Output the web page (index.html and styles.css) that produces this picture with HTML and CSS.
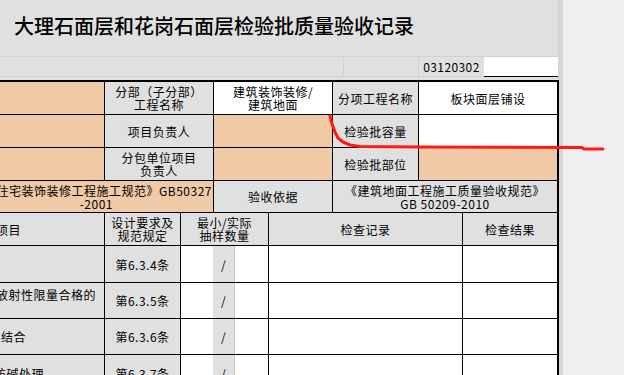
FILE: index.html
```html
<!DOCTYPE html>
<html lang="zh-CN">
<head>
<meta charset="utf-8">
<title>大理石面层和花岗石面层检验批质量验收记录</title>
<link rel="stylesheet" href="styles.css">
</head>
<body>
<div class="sheet">
  <div class="title">大理石面层和花岗石面层检验批质量验收记录</div>
  <div class="coderow">
    <div class="cc c1"></div>
    <div class="cc c2"></div>
    <div class="cc c3">03120302</div>
    <div class="cc c4"></div>
  </div>
  <div class="grid">
    <!-- row 1 -->
    <div class="cell p"></div>
    <div class="cell g s2"><span>分部（子分部）</span><span>工程名称</span></div>
    <div class="cell w s2"><span>建筑装饰装修/</span><span>建筑地面</span></div>
    <div class="cell g">分项工程名称</div>
    <div class="cell w s2">板块面层铺设</div>
    <!-- row 2 -->
    <div class="cell p"></div>
    <div class="cell g s2">项目负责人</div>
    <div class="cell p s2"></div>
    <div class="cell g">检验批容量</div>
    <div class="cell w s2"></div>
    <!-- row 3 -->
    <div class="cell p"></div>
    <div class="cell g s2"><span>分包单位项目</span><span>负责人</span></div>
    <div class="cell p s2"></div>
    <div class="cell g">检验批部位</div>
    <div class="cell p s2"></div>
    <!-- row 4 -->
    <div class="cell p s3 item"><span class="mr1">《住宅装饰装修工程施工规范》GB50327</span><span class="mr100">-2001</span></div>
    <div class="cell g s2">验收依据</div>
    <div class="cell g s3"><span>《建筑地面工程施工质量验收规范》</span><span>GB 50209-2010</span></div>
    <!-- header -->
    <div class="cell g item"><span class="mr83">项目</span></div>
    <div class="cell g"><span>设计要求及</span><span>规范规定</span></div>
    <div class="cell g s2"><span>最小/实际</span><span>抽样数量</span></div>
    <div class="cell g s3">检查记录</div>
    <div class="cell g">检查结果</div>
    <!-- data 1 -->
    <div class="cell g item"><span class="mr110">板块产品应符合设计要求</span></div>
    <div class="cell g">第6.3.4条</div>
    <div class="split s2"><div class="w1"></div><div class="g1">/</div><div class="w2"></div></div>
    <div class="cell w s3"></div>
    <div class="cell w"></div>
    <!-- data 2 -->
    <div class="cell g item"><span class="mr8">板块产品应有放射性限量合格的</span><span class="left">检测报告</span></div>
    <div class="cell g">第6.3.5条</div>
    <div class="split s2"><div class="w1"></div><div class="g1">/</div><div class="w2"></div></div>
    <div class="cell w s3"></div>
    <div class="cell w"></div>
    <!-- data 3 -->
    <div class="cell g item"><span class="mr78">面层与下一层结合</span></div>
    <div class="cell g">第6.3.6条</div>
    <div class="split s2"><div class="w1"></div><div class="g1">/</div><div class="w2"></div></div>
    <div class="cell w s3"></div>
    <div class="cell w"></div>
    <!-- data 4 -->
    <div class="cell g item"><span class="mr60">板块背面和侧面防碱处理</span></div>
    <div class="cell g">第6.3.7条</div>
    <div class="split s2"><div class="w1"></div><div class="g1">/</div><div class="w2"></div></div>
    <div class="cell w s3"></div>
    <div class="cell w"></div>
  </div>
</div>
<svg class="mark" width="624" height="375" viewBox="0 0 624 375">
  <polyline points="330,116 332,124 335,132 338,138 343,142 350,145 360,146.5 420,147 582,147.5 584,149 603,149" fill="none" stroke="#ff1a12" stroke-width="3" stroke-linejoin="round" stroke-linecap="round"/>
</svg>
</body>
</html>
```

FILE: styles.css
```css
html, body {
  margin: 0;
  padding: 0;
}
body {
  width: 624px;
  height: 375px;
  overflow: hidden;
  background: #efefef;
  font-family: "Noto Sans CJK SC", "Noto Sans", sans-serif;
  color: #000;
  position: relative;
}
.sheet {
  width: 558px;
  height: 375px;
  background: #e0e0e0;
  border-right: 5px solid #d8d6d2;
}
.title {
  box-sizing: border-box;
  border-bottom: 1px solid #d5d1ca;
  height: 57px;
  display: flex;
  align-items: center;
  padding: 0 0 4px 14px;
  font-size: 20px;
  font-weight: 500;
  line-height: 24px;
}
.coderow {
  display: grid;
  grid-template-columns: 344px 75px 65px 74px;
  height: 20px;
  margin-bottom: 3px;
}
.cc {
  box-sizing: border-box;
  border-bottom: 1px solid #d5d1ca;
  border-right: 1px solid #d5d1ca;
  display: flex;
  align-items: center;
  justify-content: center;
  font-size: 12px;
  letter-spacing: 0.4px;
  line-height: 13px;
}
.c3 { border-right: none; }
.c4 {
  background: #fff;
  border-right: none;
  border-bottom: 1px solid #000;
}
.grid {
  margin-left: -200px;
  display: grid;
  grid-template-columns: 304px 75px 32px 54px 63px 85px 43px 94px;
  grid-template-rows: 32px 32px 32px 31px 32px 36px 35px 35px 36px;
  gap: 1px;
  background: #000;
  border-top: 2px solid #000;
  border-right: 2px solid #000;
  width: 757px;
  font-size: 12px;
  letter-spacing: 0.5px;
  line-height: 13px;
}
.cell {
  display: flex;
  flex-direction: column;
  justify-content: center;
  align-items: center;
  text-align: center;
  white-space: nowrap;
  overflow: hidden;
}
.g { background: #e0e0e0; }
.p { background: #f0c9a6; }
.w { background: #fff; }
.s2 { grid-column: span 2; }
.s3 { grid-column: span 3; }
.item { align-items: flex-end; }
.item .left { align-self: flex-start; margin-left: 4px; }
.mr1 { margin-right: 1px; }
.mr8 { margin-right: 8px; }
.mr60 { margin-right: 60px; }
.mr78 { margin-right: 78px; }
.mr83 { margin-right: 83px; }
.mr100 { margin-right: 100px; }
.mr110 { margin-right: 110px; }
.split {
  display: flex;
  background: #fff;
}
.w1 { width: 32px; background: #fff; }
.g1 {
  width: 21px;
  background: #e0e0e0;
  border-right: 1px solid #c9c9c9;
  display: flex;
  align-items: center;
  justify-content: center;
}
.w2 { flex: 1; background: #fff; }
.mark {
  position: absolute;
  left: 0;
  top: 0;
  pointer-events: none;
}
```
